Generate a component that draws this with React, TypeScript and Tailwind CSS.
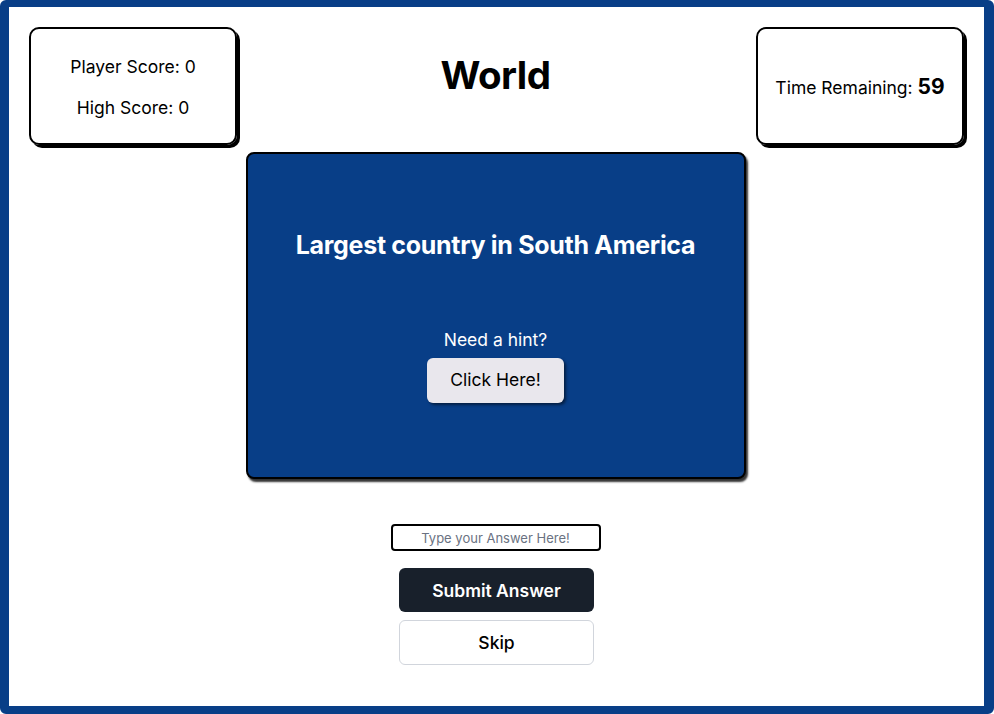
import { useState } from 'react';

export default function App() {
  const [answer, setAnswer] = useState('');

  return (
    <div
      className="h-[714px] w-[994px] bg-white border-[#083e87] border-l-[9px] border-t-[7px] border-r-[10px] border-b-[8px] rounded-[6px] text-black"
      style={{ fontFamily: 'Inter, "Noto Sans", sans-serif' }}
    >
      <div className="flex items-start justify-between px-[20px] pt-[20px]">
        <div className="w-[208px] h-[118px] pt-[2px] border-2 border-black rounded-[10px] shadow-[3px_3px_0_#000] flex flex-col items-center justify-center gap-[20px] text-[17.5px] leading-[21px]">
          <p>Player Score: 0</p>
          <p>High Score: 0</p>
        </div>

        <h1 className="mt-[28px] mr-[2px] text-[38.5px] leading-[40px] font-bold tracking-[-0.5px]">World</h1>

        <div className="w-[208px] h-[118px] pt-[2px] border-2 border-black rounded-[10px] shadow-[3px_3px_0_#000] flex items-center justify-center text-[17.5px]">
          <p>
            Time Remaining: <span className="text-[21px] font-bold">59</span>
          </p>
        </div>
      </div>

      <div className="mx-auto mt-[7px] w-[500px] h-[327px] bg-[#083e87] border-2 border-black rounded-[8px] shadow-[2px_3px_2px_rgba(0,0,0,0.8)] flex flex-col items-center text-white -translate-x-[1px]">
        <h2 className="mt-[75px] text-[25px] leading-[32px] font-bold tracking-[-0.3px]">
          Largest country in South America
        </h2>
        <p className="mt-[68px] text-[17.5px] leading-[22px]">Need a hint?</p>
        <button className="mt-[7px] w-[137px] h-[45px] bg-[#e9e7ed] text-black text-[17.5px] rounded-[6px] shadow-[2px_2px_3px_rgba(0,0,0,0.5)]">
          Click Here!
        </button>
      </div>

      <div className="flex flex-col items-center mt-[45px]">
        <input
          value={answer}
          onChange={(e) => setAnswer(e.target.value)}
          placeholder="Type your Answer Here!"
          className="w-[210px] h-[27px] -translate-x-[1px] border-2 border-black rounded-[4px] text-center text-[13px] placeholder:text-gray-500 outline-none"
        />
        <button className="mt-[17px] w-[195px] h-[44px] pt-[3px] bg-[#18202b] text-white text-[17.5px] font-semibold rounded-[6px]">
          Submit Answer
        </button>
        <button className="mt-[8px] w-[195px] h-[45px] pt-[2px] bg-white border border-gray-300 text-[17.5px] font-medium rounded-[6px]">
          Skip
        </button>
      </div>
    </div>
  );
}
